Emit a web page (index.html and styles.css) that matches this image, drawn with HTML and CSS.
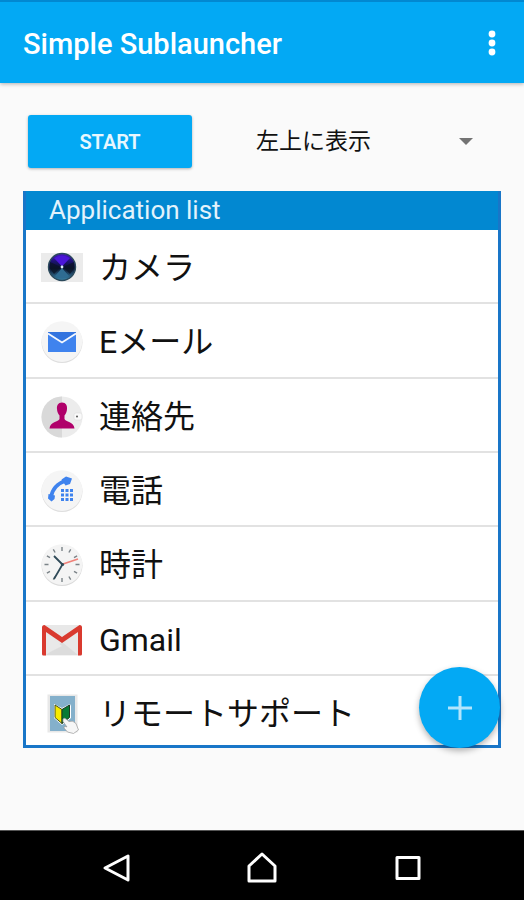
FILE: index.html
```html
<!DOCTYPE html>
<html lang="ja">
<head>
  <meta charset="UTF-8">
  <meta name="viewport" content="width=device-width, initial-scale=1">
  <title>Simple Sublauncher</title>
  <link rel="stylesheet" href="styles.css">
</head>
<body>

  <header class="app-bar">
    <h1>Simple Sublauncher</h1>
    <button class="menu-btn" aria-label="Menu">
      <svg width="8" height="26" viewBox="0 0 8 26" fill="#fff">
        <circle cx="4" cy="4" r="3.4"/>
        <circle cx="4" cy="13" r="3.4"/>
        <circle cx="4" cy="22" r="3.4"/>
      </svg>
    </button>
  </header>

  <main>
    <div class="controls">
      <button class="start-btn">START</button>
      <div class="position">
        <select aria-label="表示位置">
          <option>左上に表示</option>
        </select>
        <svg class="arrow" width="14" height="7" viewBox="0 0 14 7"><path d="M0 0h14L7 7z" fill="#737373"/></svg>
      </div>
    </div>

    <section class="panel">
      <h2>Application list</h2>
      <ul class="app-list">
        <li>
          <svg class="icon" viewBox="0 0 42 42">
            <defs>
              <linearGradient id="lens" x1="0" y1="0" x2="0" y2="1">
                <stop offset="0" stop-color="#4a18c8"/>
                <stop offset="0.3" stop-color="#1c1270"/>
                <stop offset="0.55" stop-color="#0b1430"/>
                <stop offset="1" stop-color="#3b88ac"/>
              </linearGradient>
            </defs>
            <rect y="6" width="42" height="29" fill="#ebebeb"/>
            <circle cx="21" cy="20" r="13.500" fill="url(#lens)" stroke="#2c4a5c" stroke-width="1.4"/>
            <path d="M13 11q8-5 16 0l-7.500 8h-1z" fill="#4b16d8"/>
            <path d="M9 15l11 5-7 7q-5-5-4-12zM33 15l-11 5 7 7q5-5 4-12z" fill="#0a1224" opacity="0.7"/>
            <path d="M14 29l7-8 7 8q-7 5-14 0z" fill="#2f6c92"/>
            <circle cx="21" cy="20" r="1.400" fill="#dcecf8"/>
          </svg>
          <span>カメラ</span>
        </li>
        <li>
          <svg class="icon" viewBox="0 0 42 42">
            <circle cx="21" cy="21.500" r="20.500" fill="#dedede"/>
            <circle cx="21" cy="20.600" r="20.300" fill="#f5f5f5"/>
            <rect x="7" y="11" width="28" height="20" fill="#3f83ee"/>
            <path d="M7 11h28v1.500L21 22 7 12.500z" fill="#3374df"/>
            <path d="M7 12.500L21 21.500 35 12.500" fill="none" stroke="#f5f9ff" stroke-width="1.800"/>
          </svg>
          <span>Eメール</span>
        </li>
        <li>
          <svg class="icon" viewBox="0 0 42 42">
            <circle cx="21" cy="21" r="20.500" fill="#ececec"/>
            <path d="M21 .5a20.500 20.500 0 0 0 0 41z" fill="#d9d9d9"/>
            <rect x="33" y="17" width="8" height="7" rx="2" fill="#fafafa" stroke="#ddd" stroke-width=".6"/>
            <circle cx="36" cy="20.500" r="1" fill="#555"/>
            <path d="M21 6.500c-4 0-5.300 3-5 6.500.1 3 1.200 5 2.500 6.500v3.500c-1 3-9.500 2.500-10 9.500h25c-.5-7-9-6.500-10-9.500v-3.500c1.300-1.500 2.400-3.500 2.500-6.500.3-3.500-1-6.500-5-6.500z" fill="#b0006a"/>
          </svg>
          <span>連絡先</span>
        </li>
        <li>
          <svg class="icon" viewBox="0 0 42 42">
            <circle cx="21" cy="21.500" r="20.500" fill="#dedede"/>
            <circle cx="21" cy="20.600" r="20.300" fill="#f5f5f5"/>
            <path d="M10 27Q12 15 25 10.500" fill="none" stroke="#3f83ee" stroke-width="3.600"/>
            <path d="M20.500 9.500l4.500-3 6 2-2 5.500-4.500 1.500zM7.500 24l6.500 1.500-.5 3.500-3 2.500-3.500-3z" fill="#3f83ee"/>
            <g fill="#3f83ee">
              <path d="M20 19h3v3h-3zM24.500 19h3v3h-3zM29 19h3v3h-3z"/>
              <path d="M20 23.500h3v3h-3zM24.500 23.500h3v3h-3zM29 23.500h3v3h-3z"/>
              <path d="M20 28h3v3h-3zM24.500 28h3v3h-3zM29 28h3v3h-3z"/>
            </g>
          </svg>
          <span>電話</span>
        </li>
        <li>
          <svg class="icon" viewBox="0 0 42 42">
            <circle cx="21" cy="21.500" r="20.500" fill="#dadada"/>
            <circle cx="21" cy="20.600" r="20.300" fill="#f4f4f4"/>
            <g stroke="#7b8388" stroke-width="1.400">
              <path d="M21 3v4M21 34v4M3.500 20.500h4M34.500 20.500h4"/>
              <path d="M12.300 5.400l1.800 3.100M27.900 32.500l1.800 3.100M5.900 11.800l3.100 1.800M33 27.400l3.100 1.800"/>
              <path d="M29.700 5.400l-1.800 3.100M14.100 32.500l-1.800 3.100M36.100 11.800l-3.100 1.800M9 27.400l-3.100 1.800"/>
            </g>
            <path d="M20.500 20.500L37 15" stroke="#f08078" stroke-width="1.500"/>
            <path d="M13 12l8.500 8.500L13 35" fill="none" stroke="#2f4a58" stroke-width="1.800"/>
            <circle cx="21.500" cy="20.500" r="1.600" fill="#2f4a58"/>
          </svg>
          <span>時計</span>
        </li>
        <li>
          <svg class="icon" viewBox="0 0 42 42">
            <path d="M3 6h36q2 0 2 2v27q0 1.500-2 1.500H3q-2 0-2-1.500V8q0-2 2-2z" fill="#e8e8e8"/>
            <path d="M5 36l16-13 16 13z" fill="#dcdcdc"/>
            <path d="M21 27L5 15v20z" fill="#e9e9e9"/>
            <path d="M1 8.500Q1 6 3.500 6L21 18 38.500 6Q41 6 41 8.500v26.500q0 1.500-1.500 1.500H37V13L21 24 5 13v23.500H2.500Q1 36.500 1 35z" fill="#d93a2f"/>
          </svg>
          <span>Gmail</span>
        </li>
        <li>
          <svg class="icon" viewBox="0 0 42 42">
            <rect x="6.500" y="1.500" width="30" height="38" fill="#e8e8e8"/>
            <rect x="9" y="3" width="25" height="35" fill="#84b0cb"/>
            <path d="M13 11l8 4 8-4 1 2v12l-9 7-8-7z" fill="#fff"/>
            <path d="M14 12l7 4.500v14l-7-6z" fill="#f7ea00" stroke="#45501a"/>
            <path d="M28.500 12L21 16.500v14l7.500-6z" fill="#077a35" stroke="#1c3a20"/>
            <path d="M22 26q1.500-1.500 3 0l3 2.500q4-1.500 7 2l2.500 6.500-5 3.500-6-1.500-3.500-4q-.5-2 2-1.500l1 .5-4-5.500z" fill="#f6f6f6" stroke="#999" stroke-width=".7"/>
          </svg>
          <span>リモートサポート</span>
        </li>
      </ul>
      <button class="fab" aria-label="追加">
        <svg width="24" height="24" viewBox="0 0 24 24"><path d="M12 0v24M0 12h24" stroke="#b3e5fc" stroke-width="3"/></svg>
      </button>
    </section>
  </main>

  <nav class="nav-bar">
    <button aria-label="戻る">
      <svg width="30" height="32" viewBox="0 0 30 32"><path d="M27 4v24L4 16z"/></svg>
    </button>
    <button aria-label="ホーム">
      <svg width="30" height="32" viewBox="0 0 30 32"><path d="M15 2L2 14v15h26V14z"/></svg>
    </button>
    <button aria-label="履歴">
      <svg width="30" height="32" viewBox="0 0 30 32"><path d="M4 5.500h22v21H4z"/></svg>
    </button>
  </nav>

</body>
</html>
```
FILE: styles.css
```css
* {
  box-sizing: border-box;
}

body {
  margin: 0;
  min-height: 100vh;
  display: flex;
  flex-direction: column;
  background-color: #fafafa;
  color: #111;
  font-family: Roboto, "Noto Sans CJK JP", sans-serif;
}

h1, h2 {
  margin: 0;
}

button {
  border: none;
  padding: 0;
  font-family: inherit;
  cursor: pointer;
}

svg {
  display: block;
}

.app-bar {
  display: flex;
  align-items: center;
  justify-content: space-between;
  height: 83px;
  padding: 2px 24px 0 23px;
  background-color: #03a9f4;
  border-top: 2px solid #0288d1;
  box-shadow: 0 1px 4px rgba(0, 0, 0, 0.3);
}

.app-bar h1 {
  color: #fff;
  font-size: 29px;
  font-weight: 500;
}

.menu-btn {
  padding: 0 4px 2px;
  background: none;
}

main {
  flex: 1;
  display: flex;
  flex-direction: column;
  padding: 32px 23px 82px;
}

.controls {
  display: flex;
  align-items: center;
  gap: 64px;
  padding: 0 28px 0 5px;
  margin-bottom: 23px;
}

.start-btn {
  width: 164px;
  height: 53px;
  background-color: #03a9f4;
  color: #e8f7fe;
  border-radius: 3px;
  font-size: 20px;
  font-weight: 600;
  box-shadow: 0 1px 3px rgba(0, 0, 0, 0.3);
}

.position {
  flex: 1;
  display: flex;
  align-items: center;
}

.position select {
  flex: 1;
  appearance: none;
  border: none;
  background: none;
  padding: 0;
  color: #111;
  font-family: inherit;
  font-size: 23px;
}

.arrow {
  pointer-events: none;
}

.panel {
  flex: 1;
  display: flex;
  flex-direction: column;
  position: relative;
  border: 3px solid #1976c8;
  border-top: none;
  background-color: #fff;
}

.panel h2 {
  height: 39px;
  padding: 0 23px;
  background-color: #0288d1;
  color: #e3f3fc;
  font-size: 26px;
  font-weight: 400;
  line-height: 39px;
}

.app-list {
  flex: 1;
  display: flex;
  flex-direction: column;
  list-style: none;
  margin: 0;
  padding: 0;
}

.app-list li {
  flex: 1;
  display: flex;
  align-items: center;
  gap: 16px;
  padding: 4px 15px 0;
  border-bottom: 2px solid #e2e2e2;
  font-size: 32px;
  line-height: 40px;
}

.app-list li:last-child {
  flex: none;
  height: 69px;
  padding-top: 7px;
  border-bottom: none;
}

.icon {
  width: 42px;
  height: 42px;
}

.fab {
  position: absolute;
  right: -2px;
  bottom: -3px;
  display: flex;
  align-items: center;
  justify-content: center;
  width: 81px;
  height: 81px;
  border-radius: 50%;
  background-color: #03a9f4;
  box-shadow: 0 3px 6px rgba(0, 0, 0, 0.3);
}

.nav-bar {
  display: flex;
  justify-content: center;
  align-items: center;
  gap: 116px;
  height: 70px;
  padding-top: 5px;
  background-color: #000;
  border-top: 1px solid #555;
}

.nav-bar button {
  background: none;
}

.nav-bar path {
  fill: none;
  stroke: #fff;
  stroke-width: 3;
  stroke-linejoin: round;
}
```
